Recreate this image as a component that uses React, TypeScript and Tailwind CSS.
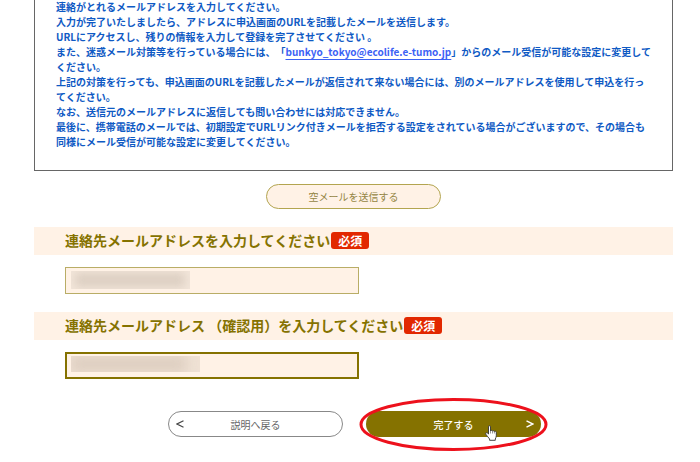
import { useState } from "react";

const ADDRESS = "bunkyo_tokyo@ecolife.e-tumo.jp";

interface EmailFieldProps {
  id: string;
  label: string;
  active?: boolean;
}

const EmailField = ({ id, label, active = false }: EmailFieldProps) => {
  const [value, setValue] = useState("");

  return (
    <section className="mt-[18px]">
      <div className="flex h-7 items-center gap-px bg-[#fff2e6] pb-0.5 pl-[31px]">
        <label htmlFor={id} className="text-[14px] leading-5 font-bold whitespace-pre text-[#857200]">
          {label}
        </label>
        <span className="rounded-[3px] bg-[#e22800] px-[7px] text-[12px] leading-[17px] font-bold text-white">
          必須
        </span>
      </div>

      <div className="relative mt-3 ml-[31px] w-[294px] max-w-full">
        <input
          id={id}
          type="email"
          value={value}
          onChange={(e) => setValue(e.target.value)}
          className={
            active
              ? "block h-[27px] w-full border-2 border-[#857200] bg-[#fff2e6] px-2 text-[10px] outline-none"
              : "block h-[27px] w-full border border-[#b9ad66] bg-[#fff2e6] px-2 text-[10px] outline-none"
          }
        />
        {/* Masked address */}
        {active ? (
          <div className="pointer-events-none absolute top-1 left-1.5 h-4 w-[129px] overflow-hidden bg-[#efe1d4]">
            <div className="h-full w-[115px] bg-[#ddcec0] blur-[6px]" />
          </div>
        ) : (
          <div className="pointer-events-none absolute top-1 left-1.5 h-[18px] w-[119px] overflow-hidden bg-[#f3e6da] py-0.5 pl-1">
            <div className="h-full w-[110px] bg-[#dccfc2] blur-[5px]" />
          </div>
        )}
      </div>
    </section>
  );
};

const HandCursor = () => (
  <svg className="pointer-events-none absolute top-[14px] left-[119px] h-4 w-3" viewBox="0 0 12 16" aria-hidden="true">
    <path
      d="M3.5 9V1.8C3.5.3 5.5.3 5.5 1.8V6c.3-.9 1.8-.9 2 .2.4-.8 1.8-.6 1.9.4.6-.7 1.9-.3 1.9.8v3.4c0 1.5-.7 2.2-1 3.2v1.3H4.6V14C3.6 12.6 1.9 10.9.8 9.2.1 8 1.6 7.2 2.5 8.1Z"
      fill="#fff"
      stroke="#333"
      strokeWidth=".9"
      strokeLinejoin="round"
    />
    <path d="M5.5 6v2.5M7.5 6.5v2M9.4 7v1.5" stroke="#333" strokeWidth=".5" />
  </svg>
);

export default function App() {
  return (
    <main
      lang="ja"
      className="min-h-screen overflow-hidden bg-white pr-[27px] pb-6 pl-[34px] font-['Noto_Sans_CJK_JP',sans-serif] [text-spacing-trim:space-all]"
    >
      <div className="-mt-px border-x border-b border-[#666] pr-5 pb-[21px] pl-[21px] text-[10px] leading-[15px] font-bold text-[#0f5ac4]">
        <p>連絡がとれるメールアドレスを入力してください。</p>
        <p>入力が完了いたしましたら、アドレスに申込画面のURLを記載したメールを送信します。</p>
        <p>URLにアクセスし、残りの情報を入力して登録を完了させてください 。</p>
        <p>
          また、迷惑メール対策等を行っている場合には、「
          <a href={`mailto:${ADDRESS}`} className="text-[#3c62f5] underline decoration-1 underline-offset-3">
            {ADDRESS}
          </a>
          」からのメール受信が可能な設定に変更してください。
        </p>
        <p>
          上記の対策を行っても、申込画面のURLを記載したメールが返信されて来ない場合には、別のメールアドレスを使用して申込を行ってください。
        </p>
        <p>なお、送信元のメールアドレスに返信しても問い合わせには対応できません。</p>
        <p>
          最後に、携帯電話のメールでは、初期設定でURLリンク付きメールを拒否する設定をされている場合がございますので、その場合も同様にメール受信が可能な設定に変更してください。
        </p>
      </div>

      <form onSubmit={(e) => e.preventDefault()}>
        <div className="mt-[13px] flex justify-center">
          <button
            type="button"
            className="h-[25px] w-[175px] rounded-full border border-[#b3a550] bg-[#fff2e6] text-[10px] text-[#948544]"
          >
            空メールを送信する
          </button>
        </div>

        <EmailField id="email" label="連絡先メールアドレスを入力してください" />
        <EmailField id="email-confirm" label="連絡先メールアドレス （確認用）を入力してください" active />

        <div className="mt-8 flex justify-center gap-[23px] pl-0.5">
          <button
            type="button"
            className="relative h-[26px] w-[175px] rounded-full border border-[#888] bg-white text-[10px] text-[#666]"
          >
            <svg className="absolute top-2 left-[7px] h-2 w-2" viewBox="0 0 8 8" fill="none" aria-hidden="true">
              <path d="M7.5 .8 1 4l6.5 3.2" stroke="#444" strokeWidth="1.2" />
            </svg>
            説明へ戻る
          </button>

          <div className="relative flex">
            <button
              type="submit"
              className="relative h-[26px] w-[175px] rounded-full bg-[#857200] text-[10px] font-medium text-white"
            >
              完了する
              <svg className="absolute top-[9px] right-[7px] h-2 w-2" viewBox="0 0 8 8" fill="none" aria-hidden="true">
                <path d="M.5 .8 7 4 .5 7.2" stroke="#fff" strokeWidth="1.4" />
              </svg>
            </button>
            {/* Hand drawn ring around the submit button */}
            <svg
              className="pointer-events-none absolute -top-[13px] -left-[7px] h-[53px] w-[189px]"
              viewBox="0 0 189 53"
              fill="none"
              aria-hidden="true"
            >
              <ellipse cx="94.5" cy="26.5" rx="92.5" ry="25" stroke="#ed111c" strokeWidth="3" />
            </svg>
            <HandCursor />
          </div>
        </div>
      </form>
    </main>
  );
}
